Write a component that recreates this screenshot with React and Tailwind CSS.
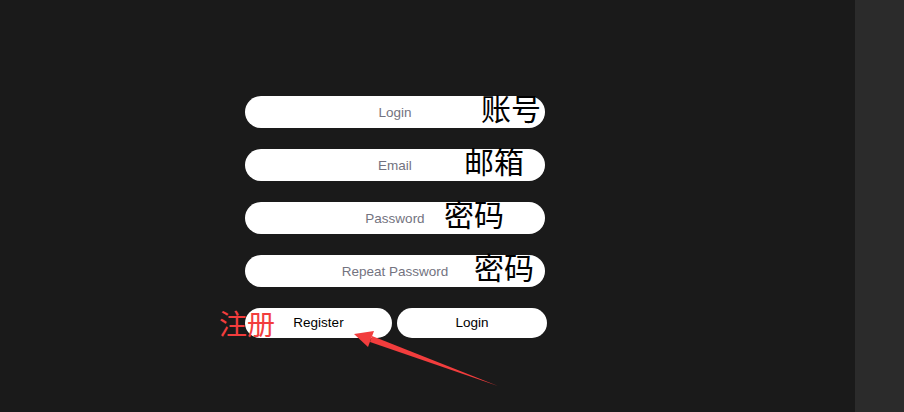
import React from 'react';

const fields = [
  { placeholder: 'Login', note: '账号', noteLeft: 'left-[236px]' },
  { placeholder: 'Email', note: '邮箱', noteLeft: 'left-[219px]' },
  { placeholder: 'Password', note: '密码', noteLeft: 'left-[199px]', type: 'password' },
  { placeholder: 'Repeat Password', note: '密码', noteLeft: 'left-[229px]', type: 'password' },
];

const cjk = { fontFamily: '"Noto Sans CJK SC", "Liberation Sans", sans-serif' };

const Field = ({ placeholder, note, noteLeft, type = 'text' }) => (
  <div className="relative h-[32px] w-[300px]">
    <input
      type={type}
      placeholder={placeholder}
      className="h-full w-full rounded-full bg-white text-center text-[13.5px] text-black outline-none placeholder:text-[#737380]"
    />
    <span
      className={`pointer-events-none absolute top-[-4px] ${noteLeft} text-[30px] leading-none text-black`}
      style={cjk}
    >
      {note}
    </span>
  </div>
);

const App = () => {
  return (
    <div
      className="flex h-[412px] w-[904px] overflow-hidden bg-[#1a1a1a]"
      style={{ fontFamily: '"Liberation Sans", Arial, sans-serif' }}
    >
      <div className="relative flex-1">
        <form className="ml-[245px] mt-[96px] flex w-[302px] flex-col gap-[21px]" onSubmit={(e) => e.preventDefault()}>
          {fields.map((f) => (
            <Field key={f.placeholder} {...f} />
          ))}
          <div className="relative flex gap-[5px]">
            <button type="button" className="h-[30px] w-[147px] rounded-full bg-white text-[13.5px] text-black">
              Register
            </button>
            <button type="submit" className="h-[30px] w-[150px] rounded-full bg-white text-[13.5px] text-black">
              Login
            </button>
            <span
              className="pointer-events-none absolute left-[-26px] top-[1px] text-[28px] leading-none text-[#f23d3d]"
              style={cjk}
            >
              注册
            </span>
          </div>
        </form>
        {/* annotation arrow */}
        <svg className="pointer-events-none absolute left-0 top-0" width="855" height="412">
          <polygon points="498,386 372,336 370,342" fill="#f23d3d" />
          <polygon points="354,334 374,331 368,347" fill="#f23d3d" />
        </svg>
      </div>
      <div className="w-[49px] bg-[#2b2b2b]" />
    </div>
  );
};

export default App;
